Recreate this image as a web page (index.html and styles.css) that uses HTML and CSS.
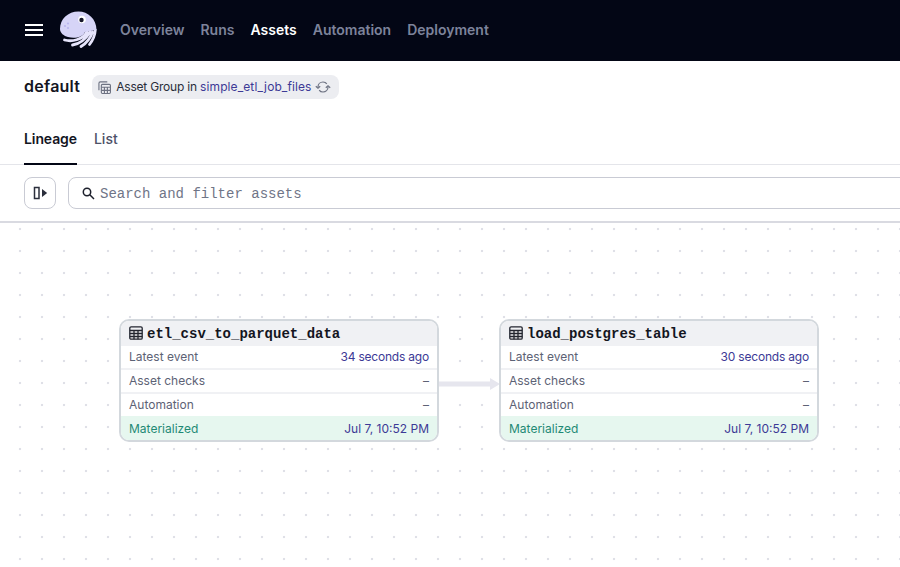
FILE: index.html
```html
<!DOCTYPE html>
<html lang="en">
<head>
  <meta charset="UTF-8">
  <title>default - Assets</title>
  <link rel="stylesheet" href="styles.css">
</head>
<body>
  <!-- top nav -->
  <header class="topbar">
    <button class="menu-btn" aria-label="Menu">
      <svg width="20" height="14" viewBox="0 0 20 14"><path d="M1 2h18M1 7h18M1 12h18" stroke="#fff" stroke-width="2"/></svg>
    </button>
    <svg class="logo" width="38" height="38" viewBox="0 0 38 38">
      <path d="M5.500 29C13 31 23 29 28 21M13.500 34C20 33 27 28 31 21M22 35.500C27 32.500 31.500 27 33.500 21M30.500 33.500C34 29 36 24 36.300 19" stroke="#e6e4fb" stroke-width="2.800" stroke-linecap="round" fill="none"/>
      <path d="M1 18C1 8 9 .5 19.500 .5 29 .5 37.500 8 37.500 19L26 21C24 26 16 28 9 26 5 25 1 22 1 18z" fill="#d6d4f7"/>
      <circle cx="23" cy="8.500" r="3.800" fill="#fff"/>
      <circle cx="22.500" cy="9" r="2.200" fill="#17172b"/>
      <circle cx="6" cy="15" r="1.100" fill="#b9b5ee"/><circle cx="9" cy="12.500" r="1.100" fill="#b9b5ee"/><circle cx="9" cy="17" r="1.100" fill="#b9b5ee"/>
    </svg>
    <nav class="topnav">
      <a href="#overview">Overview</a>
      <a href="#runs">Runs</a>
      <a href="#assets" class="active">Assets</a>
      <a href="#automation">Automation</a>
      <a href="#deployment">Deployment</a>
    </nav>
  </header>

  <!-- page title -->
  <div class="title-row">
    <h1>default</h1>
    <div class="group-tag">
      <svg width="13" height="13" viewBox="0 0 14 14" fill="none" stroke="#6d7282" stroke-width="1.200">
        <path d="M1 10V2.500C1 1.700 1.700 1 2.500 1H10"/>
        <rect x="3.600" y="3.600" width="9.800" height="9.800" rx="1.200"/>
        <path d="M3.600 6.800h9.800M3.600 10.100h9.800M6.900 6.800v6.600M10.100 6.800v6.600"/>
      </svg>
      <span>Asset Group in <a href="#group">simple_etl_job_files</a></span>
      <svg class="sync" width="16" height="14" viewBox="0 0 16 14" fill="none" stroke="#6d7282" stroke-width="1.200">
        <path d="M3 7c0-3 2.300-5 5-5 1.600 0 3 .7 3.800 1.900"/>
        <path d="M13 7c0 3-2.300 5-5 5-1.600 0-3-.7-3.800-1.900"/>
        <path d="M.8 6.200 3 8.200 5.200 6.200M10.800 7.800 13 5.800 15.200 7.800"/>
      </svg>
    </div>
  </div>

  <!-- tabs -->
  <div class="tabs">
    <a href="#lineage" class="tab selected">Lineage</a>
    <a href="#list" class="tab">List</a>
  </div>

  <!-- toolbar -->
  <div class="toolbar">
    <button class="square-btn" aria-label="Toggle sidebar">
      <svg width="16" height="14" viewBox="0 0 16 14">
        <rect x="2.500" y="1.500" width="4.500" height="11" fill="none" stroke="#2b2f3c" stroke-width="1.500"/>
        <path d="M10 3l5.200 4-5.200 4z" fill="#2b2f3c"/>
      </svg>
    </button>
    <div class="search">
      <svg width="13" height="13" viewBox="0 0 13 13" fill="none" stroke="#1c1f2b" stroke-width="1.500">
        <circle cx="5" cy="5" r="3.700"/><path d="M7.800 7.800 12 12"/>
      </svg>
      <span class="search-text">Search and filter assets</span>
    </div>
  </div>

  <!-- lineage graph -->
  <main class="canvas">
    <svg class="edge" width="64" height="14" viewBox="0 0 64 14">
      <path d="M0 7h54" stroke="#e6e6ee" stroke-width="5"/>
      <path d="M52 1l10 6-10 6z" fill="#e6e6ee"/>
    </svg>

    <div class="node node-left">
      <div class="node-head">
        <svg width="14" height="14" viewBox="0 0 14 14" fill="none" stroke="#22252f" stroke-width="1.300"><rect x=".8" y=".8" width="12.400" height="12.400" rx="1.300"/><path d="M.8 4.500h12.400M.8 7.500h12.400M.8 10.500h12.400M5 4.500v8.700M9 4.500v8.700"/></svg>
        <span>etl_csv_to_parquet_data</span>
      </div>
      <div class="node-row"><span>Latest event</span><a class="ago" href="#e1">34 seconds ago</a></div>
      <div class="node-row"><span>Asset checks</span><em>–</em></div>
      <div class="node-row"><span>Automation</span><em>–</em></div>
      <div class="node-row status"><span>Materialized</span><a href="#m1">Jul 7, 10:52 PM</a></div>
    </div>

    <div class="node node-right">
      <div class="node-head">
        <svg width="14" height="14" viewBox="0 0 14 14" fill="none" stroke="#22252f" stroke-width="1.300"><rect x=".8" y=".8" width="12.400" height="12.400" rx="1.300"/><path d="M.8 4.500h12.400M.8 7.500h12.400M.8 10.500h12.400M5 4.500v8.700M9 4.500v8.700"/></svg>
        <span>load_postgres_table</span>
      </div>
      <div class="node-row"><span>Latest event</span><a class="ago" href="#e2">30 seconds ago</a></div>
      <div class="node-row"><span>Asset checks</span><em>–</em></div>
      <div class="node-row"><span>Automation</span><em>–</em></div>
      <div class="node-row status"><span>Materialized</span><a href="#m2">Jul 7, 10:52 PM</a></div>
    </div>
  </main>
</body>
</html>
```

FILE: styles.css
```css
:root {
  --navy: #030615;
  --text: #14161f;
  --muted: #5d6275;
  --link: #3d3a96;
  --line: #e4e5ea;
  --line-strong: #c9cbd4;
}

html, body {
  height: 100%;
}

body {
  margin: 0;
  display: flex;
  flex-direction: column;
  overflow: hidden;
  background: #fff;
  color: var(--text);
  font-family: Inter, "Liberation Sans", sans-serif;
}

a {
  text-decoration: none;
}

button {
  padding: 0;
  background: none;
  border: 0;
}

/* top nav */
.topbar {
  flex: none;
  height: 61px;
  display: flex;
  align-items: center;
  padding-left: 24px;
  background: var(--navy);
}

.menu-btn {
  display: flex;
  width: 20px;
  height: 14px;
  margin-bottom: 2px;
}

.logo {
  margin-left: 15px;
  margin-bottom: 2px;
}

.topnav {
  display: flex;
  gap: 16px;
  margin-left: 23px;
  padding-bottom: 2px;
}

.topnav a {
  color: #7d839b;
  font-size: 14px;
  font-weight: 600;
  line-height: 20px;
}

.topnav a.active {
  color: #fff;
}

/* title */
.title-row {
  flex: none;
  height: 52px;
  display: flex;
  align-items: center;
  gap: 12px;
  padding: 0 24px;
}

h1 {
  margin: 0;
  padding-bottom: 2px;
  font-size: 16px;
  font-weight: 600;
  line-height: 24px;
  letter-spacing: .25px;
}

.group-tag {
  display: flex;
  align-items: center;
  gap: 5px;
  height: 24px;
  padding: 0 8px 0 6px;
  border-radius: 8px;
  background: #ecedf1;
  font-size: 12px;
  color: #2a2d3a;
}

.group-tag span {
  margin-right: -2px;
  padding-bottom: 1px;
  letter-spacing: -.2px;
}

.group-tag svg {
  flex: none;
}

.group-tag a {
  color: var(--link);
  letter-spacing: .1px;
}

/* tabs */
.tabs {
  flex: none;
  height: 52px;
  box-sizing: border-box;
  display: flex;
  gap: 17px;
  padding: 0 24px;
  border-bottom: 1px solid var(--line);
}

.tab {
  height: 52px;
  box-sizing: border-box;
  padding-top: 16px;
  color: #4d5268;
  font-size: 14px;
  font-weight: 500;
  line-height: 20px;
}

.tab.selected {
  color: var(--text);
  font-weight: 600;
  letter-spacing: -.1px;
  border-bottom: 2px solid var(--navy);
}

/* toolbar */
.toolbar {
  flex: none;
  height: 58px;
  box-sizing: border-box;
  display: flex;
  align-items: flex-start;
  gap: 12px;
  padding: 12px 24px 0;
  overflow: hidden;
  border-bottom: 2px solid #d9dae1;
}

.square-btn {
  flex: none;
  width: 32px;
  height: 32px;
  display: flex;
  align-items: center;
  justify-content: center;
  border: 1px solid var(--line-strong);
  border-radius: 8px;
}

.search {
  flex: none;
  width: 900px;
  height: 32px;
  box-sizing: border-box;
  display: flex;
  align-items: center;
  gap: 5px;
  padding-left: 13px;
  border: 1px solid var(--line-strong);
  border-radius: 8px;
  color: #6f7587;
  font-family: "Liberation Mono", monospace;
  font-size: 14px;
}

.search-text {
  padding-top: 2px;
}

/* graph */
.canvas {
  position: relative;
  flex: 1;
  background-color: #fff;
  background-image: radial-gradient(circle, #dfe0e7 1.2px, transparent 1.6px);
  background-size: 22px 22px;
  background-position: 9px -5px;
}

.node {
  position: absolute;
  top: 96px;
  width: 320px;
  box-sizing: border-box;
  border: 2px solid #d3d8dd;
  border-radius: 10px;
  overflow: hidden;
  background: #fff;
  font-size: 12px;
  line-height: 22px;
}

.node-left {
  left: 119px;
}

.node-right {
  left: 499px;
}

.edge {
  position: absolute;
  top: 154px;
  left: 438px;
}

.node-head {
  display: flex;
  align-items: center;
  gap: 4px;
  height: 23px;
  padding: 0 8px;
  background: #f0f1f4;
  color: var(--text);
  font-family: "Liberation Mono", monospace;
  font-size: 14px;
  font-weight: 700;
}

.node-head span {
  padding-top: 2px;
}

.node-row {
  display: flex;
  justify-content: space-between;
  height: 22px;
  padding: 0 8px;
  border-top: 2px solid #f0f1f4;
  color: var(--muted);
}

.node-row a {
  color: var(--link);
}

.node-row a.ago {
  letter-spacing: -.2px;
}

.node-row em {
  font-style: normal;
}

.node-row.status {
  background: #e6f7ef;
  color: #1f8a75;
  border-top-color: #e6f7ef;
}
```
